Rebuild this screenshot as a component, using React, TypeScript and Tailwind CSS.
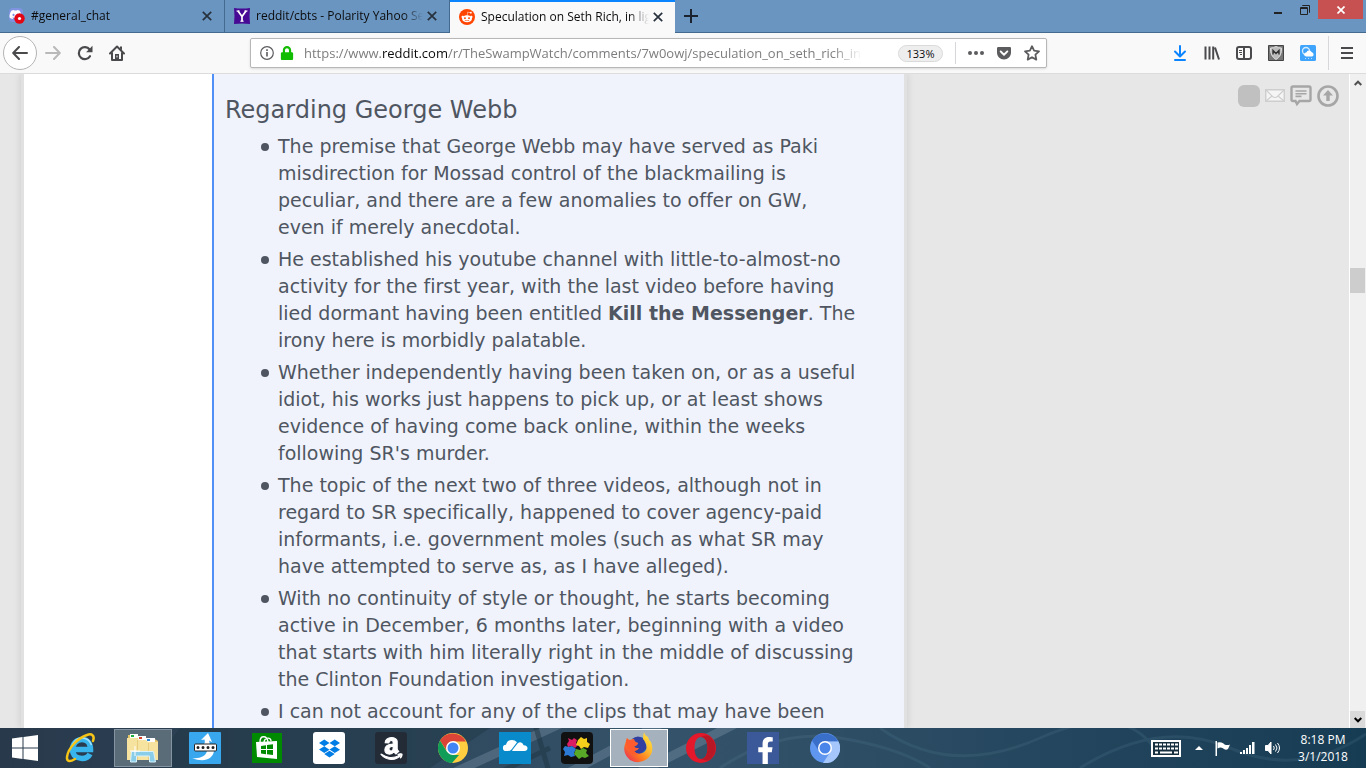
import React, { useState } from 'react';
import { FaAmazon, FaDiscord, FaDropbox, FaFacebookF, FaGetPocket, FaLock, FaRedditAlien } from 'react-icons/fa';

const uiFont = "font-['Open_Sans',sans-serif]";

const CloseIcon = () => (
  <svg width="10" height="10" viewBox="0 0 10 10" fill="none" stroke="#27313c" strokeWidth="1.7">
    <path d="M.8.8l8.4 8.4M9.2.8L.8 9.2" />
  </svg>
);

const tabs = [
  {
    title: '#general_chat',
    active: false,
    icon: (
      <span className="relative block size-4">
        <span className="absolute left-0 top-0 h-3.5 w-3.5 rounded bg-[#7f93e0] text-white">
          <FaDiscord size={13} />
        </span>
        <svg className="absolute left-[5px] top-[5px]" width="11" height="11" viewBox="0 0 11 11">
          <circle cx="5.5" cy="5.5" r="5.2" fill="#e30613" />
          <circle cx="5.5" cy="5.5" r="1.6" fill="#fff" />
        </svg>
      </span>
    ),
  },
  {
    title: 'reddit/cbts - Polarity Yahoo Sea',
    active: false,
    icon: (
      <svg width="16" height="16" viewBox="0 0 16 16">
        <path fill="#470a94" d="M0 0q8 1 16 0q-1 8 0 16q-8-1-16 0q1-8 0-16z" />
        <path fill="none" stroke="#fff" strokeWidth="1.7" d="M3.8 2.8L8 8.6l4.2-5.8M8 8v5.5" />
        <path stroke="#fff" d="M2.5 3h3.2M10.3 3h3.2M6.3 13.2h3.4" />
      </svg>
    ),
  },
  {
    title: 'Speculation on Seth Rich, in light',
    active: true,
    icon: (
      <span className="flex size-4 items-center justify-center rounded-full bg-[#ff4500] text-white">
        <FaRedditAlien size={12} />
      </span>
    ),
  },
];

const TabStrip = () => {
  const [current, setCurrent] = useState(tabs.findIndex((tab) => tab.active));

  return (
    <div className={`flex h-[33px] shrink-0 bg-[#6a95c0] ${uiFont}`}>
      {tabs.map((tab, i) => (
        <div
          key={tab.title}
          className={`flex w-[225px] items-center pl-[9px] pr-3 ${
            current === i
              ? 'border-t-2 border-[#0a84ff] bg-[#f9f9fa] pb-0.5'
              : 'border-b border-r border-[#446a8f]'
          }`}
        >
          <button type="button" className="flex min-w-0 flex-1 items-center gap-1.5" onClick={() => setCurrent(i)}>
            {tab.icon}
            <span className="flex-1 overflow-hidden whitespace-nowrap text-left text-[12px] leading-4 text-[#0c0c0d] [mask-image:linear-gradient(to_left,transparent,black_20px)]">
              {tab.title}
            </span>
          </button>
          <button type="button" aria-label="Close tab" className="ml-1">
            <CloseIcon />
          </button>
        </div>
      ))}
      <div className="flex flex-1 items-start justify-between border-b border-[#446a8f]">
        <button type="button" aria-label="New tab" className="p-[9px]">
          <svg width="14" height="14" viewBox="0 0 14 14" stroke="#1b242e" strokeWidth="2">
            <path d="M7 0v14M0 7h14" />
          </svg>
        </button>
        <div className="flex pr-[3px]">
          <button type="button" aria-label="Minimize" className="flex h-[19px] w-[26px] items-center justify-center">
            <svg width="8" height="12" viewBox="0 0 8 12"><path fill="#222" d="M0 8h8v2H0z" /></svg>
          </button>
          <button type="button" aria-label="Restore" className="flex h-[19px] w-[27px] items-center justify-center">
            <svg width="10" height="10" viewBox="0 0 10 10" fill="none" stroke="#222">
              <path d="M2.5 1V.5h7v7H9M.5 2.5h7v7h-7zM.5 3.5h7" />
            </svg>
          </button>
          <button type="button" aria-label="Close window" className="flex h-[19px] w-[45px] items-center justify-center bg-[#c75050]">
            <svg width="8" height="8" viewBox="0 0 8 8" stroke="#fff" strokeWidth="1.7"><path d="M.5.5l7 7M7.5.5l-7 7" /></svg>
          </button>
        </div>
      </div>
    </div>
  );
};

const NavBar = () => (
  <nav className={`flex h-[41px] shrink-0 items-center border-b border-[#dcdcdd] bg-[#f9f9fa] pl-[3px] ${uiFont}`}>
    <button type="button" aria-label="Back" className="flex size-[34px] items-center justify-center rounded-full border border-[#b4b4b5] bg-white">
      <svg width="16" height="14" viewBox="0 0 16 14" fill="none" stroke="#4a4a4d" strokeWidth="2" strokeLinecap="round" strokeLinejoin="round">
        <path d="M15 7H1.5M7 1L1.2 7L7 13" />
      </svg>
    </button>
    <button type="button" aria-label="Forward" className="ml-2">
      <svg width="16" height="14" viewBox="0 0 16 14" fill="none" stroke="#b9b9ba" strokeWidth="2" strokeLinecap="round" strokeLinejoin="round">
        <path d="M1 7h13.5M9 1l5.8 6L9 13" />
      </svg>
    </button>
    <button type="button" aria-label="Reload" className="ml-4">
      <svg width="16" height="16" viewBox="0 0 16 16">
        <path fill="none" stroke="#4a4a4d" strokeWidth="2.2" strokeLinecap="round" d="M13 11.2A6 6 0 1 1 12.6 4.5" />
        <path fill="#4a4a4d" d="M15.5.8v6.4H9.1z" />
      </svg>
    </button>
    <button type="button" aria-label="Home" className="ml-4">
      <svg width="16" height="16" viewBox="0 0 16 16" fill="none" stroke="#4a4a4d" strokeWidth="2" strokeLinejoin="round" strokeLinecap="round">
        <path d="M1 8.5L8 1.5l7 7M3 8v7h10V8" />
        <path fill="#4a4a4d" stroke="none" d="M6 9h4v6H6zM11 1.5h2v4l-2-2z" />
        <path stroke="#f9f9fa" strokeWidth="1" d="M8 11v1" />
      </svg>
    </button>
    <div className="ml-[125px] flex h-[30px] w-[797px] items-center rounded-[2px] border border-[#b7b7b8] bg-white pl-[9px] pr-[6px] shadow-sm">
      <svg width="14" height="14" viewBox="0 0 14 14">
        <circle cx="7" cy="7" r="6.3" fill="none" stroke="#5c5c5f" strokeWidth="1.2" />
        <path fill="#5c5c5f" d="M6.2 6h1.6v4.5H6.2zM6.2 3.3h1.6v1.6H6.2z" />
      </svg>
      <FaLock className="ml-1.5 text-[#12bc00]" size={14} />
      <div className="relative ml-[10px] h-5 min-w-0 flex-1 overflow-hidden text-[13px] leading-5">
        <input
          aria-label="Address"
          readOnly
          className="absolute inset-0 w-full text-transparent outline-none"
        />
        <span className="pointer-events-none block whitespace-nowrap text-[#7d7d7f] [mask-image:linear-gradient(to_left,transparent,black_30px)]">
          https://www.<span className="text-[#0c0c0d]">reddit.com</span>/r/TheSwampWatch/comments/7w0owj/speculation_on_seth_rich_in
        </span>
      </div>
      <button type="button" className="ml-9 h-[17px] w-[45px] rounded-full border border-[#dadada] bg-[#eeeeef] text-[11px] leading-[15px] text-[#0c0c0d]">
        133%
      </button>
      <span className="ml-3 h-[22px] w-px bg-[#d7d7db]" />
      <button type="button" aria-label="Page actions" className="ml-3">
        <svg width="16" height="16" viewBox="0 0 16 16" fill="#5c5c5f">
          <circle cx="2" cy="8" r="2" /><circle cx="8" cy="8" r="2" /><circle cx="14" cy="8" r="2" />
        </svg>
      </button>
      <button type="button" aria-label="Save to Pocket" className="ml-3 text-[#5c5c5f]">
        <FaGetPocket size={16} />
      </button>
      <button type="button" aria-label="Bookmark" className="ml-3">
        <svg width="16" height="16" viewBox="0 0 16 16" fill="none" stroke="#5c5c5f" strokeWidth="1.8" strokeLinejoin="round">
          <path d="M8 1.2l2.1 4.5 4.9.6-3.6 3.4.9 4.9L8 12.2l-4.3 2.4.9-4.9L1 6.3l4.9-.6z" />
        </svg>
      </button>
    </div>
    <div className="ml-auto flex items-center gap-4 pr-[11px]">
      <button type="button" aria-label="Downloads">
        <svg width="16" height="16" viewBox="0 0 16 16" fill="none" stroke="#0a84ff" strokeWidth="2" strokeLinecap="round" strokeLinejoin="round">
          <path d="M8 1v10M3 6.500l5 5 5-5M3 15h10" />
        </svg>
      </button>
      <button type="button" aria-label="Library">
        <svg width="16" height="16" viewBox="0 0 16 16" fill="none" stroke="#4a4a4d" strokeWidth="2">
          <path d="M1.500 1.500v13M5.500 1.500v13M9.200 1.500v13M11 2.500l4 12" />
        </svg>
      </button>
      <button type="button" aria-label="Sidebars">
        <svg width="16" height="16" viewBox="0 0 16 16" fill="none" stroke="#4a4a4d" strokeWidth="2">
          <rect x="1" y="2" width="14" height="12" rx="2" />
          <path d="M8 2v12" />
          <path strokeWidth="1" d="M3 5.500h3M3 7.500h3M4 9.500h2" />
        </svg>
      </button>
      <button type="button" aria-label="Shield add-on">
        <svg width="16" height="16" viewBox="0 0 16 16">
          <path fill="#777" stroke="#444" d="M.5.5h15v15H.5z" />
          <path fill="#bbb" stroke="#ddd" d="M2.500 3q3 0 5.500-1.500Q10.500 3 13.500 3q.5 8-5.500 11.500Q2 11 2.500 3z" />
          <path fill="none" stroke="#333" strokeWidth="1.400" d="M5 9.500V5.500l3 3 3-3v4" />
        </svg>
      </button>
      <button type="button" aria-label="Weather">
        <svg width="16" height="16" viewBox="0 0 16 16">
          <rect width="16" height="16" rx="1.500" fill="#3fa4fb" />
          <circle cx="6" cy="6" r="3.500" fill="none" stroke="#d5ecff" strokeWidth="1.300" />
          <path fill="#fff" d="M6 11.500a2 2 0 0 1 .3-4 3 3 0 0 1 5.500-.2 2.200 2.200 0 0 1 .4 4.200z" />
          <path stroke="#b9dfff" strokeDasharray="1 2" d="M5 13.500h7" />
        </svg>
      </button>
      <span className="-ml-1 h-[34px] w-px bg-[#d7d7db]" />
      <button type="button" aria-label="Menu" className="-ml-1.5">
        <svg width="16" height="16" viewBox="0 0 16 16" stroke="#4a4a4d" strokeWidth="2">
          <path d="M2 3h12M2 8h12M2 13h12" />
        </svg>
      </button>
    </div>
  </nav>
);

const points: React.ReactNode[] = [
  'The premise that George Webb may have served as Paki misdirection for Mossad control of the blackmailing is peculiar, and there are a few anomalies to offer on GW, even if merely anecdotal.',
  <>
    He established his youtube channel with little-to-almost-no activity for the first year, with the last video before having
    lied dormant having been entitled <strong>Kill the Messenger</strong>. The irony here is morbidly palatable.
  </>,
  "Whether independently having been taken on, or as a useful idiot, his works just happens to pick up, or at least shows evidence of having come back online, within the weeks following SR's murder.",
  'The topic of the next two of three videos, although not in regard to SR specifically, happened to cover agency-paid informants, i.e. government moles (such as what SR may have attempted to serve as, as I have alleged).',
  'With no continuity of style or thought, he starts becoming active in December, 6 months later, beginning with a video that starts with him literally right in the middle of discussing the Clinton Foundation investigation.',
  'I can not account for any of the clips that may have been',
];

const Page = () => (
  <main className="flex min-h-0 flex-1 overflow-hidden bg-[#e7e7e7] font-['DejaVu_Sans',sans-serif] [font-variant-ligatures:none]">
    <div className="ml-[21px] flex shrink-0 border-x-[3px] border-[#e1e1e1] bg-white pl-[188px] shadow-[0_0_8px_rgba(0,0,0,0.12)]">
      <article className="w-[692px] border-l-2 border-[#4f8ff7] bg-[#f0f3fc] pl-[11px] text-[#4f5661]">
        <h2 className="mt-5 text-[24px] leading-8">Regarding George Webb</h2>
        <ul className="mt-[7px] w-[633px] space-y-[5px] pl-[53px]">
          {points.map((point, i) => (
            <li key={i} className="relative text-[19px] leading-[27px]">
              <span className="absolute -left-[17px] top-[10px] size-2 rounded-full bg-[#4f5661]" />
              {point}
            </li>
          ))}
        </ul>
      </article>
    </div>
    <div className="flex flex-1 items-start justify-end gap-[5px] pr-[10px] pt-[11px]">
      <span className="size-[22px] rounded-md bg-[#c0c0c0]" />
      <a href="#messages" aria-label="Messages" className="mt-1">
        <svg width="20" height="13" viewBox="0 0 20 13" fill="#f5f5f5" stroke="#cecece" strokeWidth="1.500">
          <path d="M.7.7h18.600v11.600H.7z" />
          <path fill="none" strokeWidth="1.200" d="M1 1l6.500 6.500Q10 9.500 12.500 7.500L19 1M1 12l6-5M19 12l-6-5" />
        </svg>
      </a>
      <a href="#chat" aria-label="Chat">
        <svg width="22" height="22" viewBox="0 0 22 22" fill="none" stroke="#a6a6a6" strokeWidth="2.400">
          <path d="M3 1.500h16q1.500 0 1.500 1.500v11.500q0 1.500-1.500 1.500H9.500L7 19l-1.500-3H3q-1.500 0-1.500-1.500V3q0-1.500 1.500-1.500z" />
          <path strokeWidth="1.600" d="M5.500 6h11M5.500 8.700h11M5.500 11.400h6" />
        </svg>
      </a>
      <a href="#top" aria-label="Back to top">
        <svg width="22" height="22" viewBox="0 0 22 22">
          <circle cx="11" cy="11" r="9.500" fill="none" stroke="#a6a6a6" strokeWidth="2.600" />
          <path fill="#a6a6a6" d="M11 5l5 5.500h-3.300V16H9.300v-5.500H6z" />
        </svg>
      </a>
    </div>
    <div className="flex w-[17px] shrink-0 flex-col border-l border-white bg-[#f0f0f0]">
      <button type="button" aria-label="Scroll up" className="flex h-[17px] w-full items-center justify-center">
        <svg width="8" height="6" viewBox="0 0 8 6" fill="none" stroke="#505050" strokeWidth="2"><path d="M.7 5L4 1.700 7.300 5" /></svg>
      </button>
      <div className="mt-[177px] h-[25px] w-[15px] bg-[#cdcdcd]" />
      <button type="button" aria-label="Scroll down" className="mt-auto flex h-[17px] w-[15px] items-center justify-center bg-[#dadada]">
        <svg width="8" height="6" viewBox="0 0 8 6" fill="none" stroke="#000" strokeWidth="2"><path d="M.7 1L4 4.300 7.300 1" /></svg>
      </button>
    </div>
  </main>
);

const apps = [
  {
    name: 'Internet Explorer',
    icon: (
      <svg width="32" height="32" viewBox="0 0 32 32">
        <path fill="none" stroke="#39b5ee" strokeWidth="5.500" d="M8 17.500h17.500C25.500 11 22 7.500 17 7.500S7.500 11.500 7.500 17.500 12 26.500 17 26.500c4 0 6.500-1.500 8-4.500" />
        <path fill="none" stroke="#a7e2fb" strokeWidth="1.500" d="M7 14q3-8 10-8t9.500 7" />
        <path fill="none" stroke="#f6c416" strokeWidth="2.500" strokeLinecap="round" d="M28 9c2-5-1-8-6-6C13 6 3 16 2 25c-.5 5 3 5 8 2" />
      </svg>
    ),
  },
  {
    name: 'File Explorer',
    open: true,
    icon: (
      <svg width="34" height="30" viewBox="0 0 34 30">
        <path fill="#e3c468" d="M2 2h9l2 3h14l5 3v19H2z" />
        <path fill="#fff" d="M4 1h8v4H4zM12 3h8v4h-8zM20 5h9v4h-9z" />
        <path fill="#1fae3b" d="M5 2h3v2H5z" /><path fill="#d9402b" d="M13 4h3v2h-3z" /><path fill="#2d8bd8" d="M21 6h3v2h-3z" />
        <path fill="#f7e3a0" d="M1 5h10l2 2h7l2 2h10v18H1z" />
        <path stroke="#e8cd80" d="M11.500 7v20M22.500 10v17" />
        <path fill="#89cde9" stroke="#d6f2fc" d="M5.500 18.500h22l2 10.500h-6v-6h-13v6h-6z" />
        <path stroke="#fff" d="M9 13v10M4 18h10" />
      </svg>
    ),
  },
  {
    name: 'Password Manager',
    icon: (
      <svg width="32" height="32" viewBox="0 0 32 32">
        <rect width="32" height="32" rx="1" fill="#39a7ee" />
        <path fill="#fff" d="M19 1l4 9-3-1.500q1 3 .5 4H15q1.500-3 .5-5L12 8zM25 19c-1 8-10 12-22 7 8 1 14-2 15-7z" />
        <rect x="5.500" y="12" width="22" height="7" rx="1" fill="#fff" stroke="#222" />
        <path stroke="#222" strokeWidth="3" strokeLinecap="round" strokeDasharray="0 5" d="M9 15.500h16" />
      </svg>
    ),
  },
  {
    name: 'Store',
    icon: (
      <svg width="30" height="30" viewBox="0 0 30 30">
        <path fill="#008a00" d="M0 0h30v30H0z" />
        <path fill="none" stroke="#fff" strokeWidth="1.400" d="M8 9c0-7 7-7 8 0M12 9c1-5 7-5 7-1" />
        <path fill="#fff" d="M4 9l21-1v18L5 24z" />
        <path fill="#008a00" d="M9 13l5-.7V16H9zM15 12l6-.7V16h-6zM9 17h5v4.200L9 20.500zM15 17h6v5l-6-.7z" />
      </svg>
    ),
  },
  {
    name: 'Dropbox',
    icon: (
      <span className="flex size-8 items-center justify-center rounded-[3px] bg-white text-[#007ee5]">
        <FaDropbox size={21} />
      </span>
    ),
  },
  {
    name: 'Amazon',
    icon: (
      <span className="flex size-8 items-center justify-center rounded-[3px] bg-[#232b37] text-white">
        <FaAmazon size={25} stroke="currentColor" strokeWidth={22} />
      </span>
    ),
  },
  {
    name: 'Chrome',
    icon: (
      <svg width="30" height="30" viewBox="0 0 30 30">
        <circle cx="15" cy="15" r="15" fill="#ffcd40" />
        <path fill="#db4437" d="M2 7.500A15 15 0 0 1 28 8.500H15L9 18z" />
        <path fill="#0f9d58" d="M2 7.500L8.800 18.500 15 22h6l-7 8A15 15 0 0 1 2 7.500z" />
        <circle cx="15" cy="15" r="7" fill="#fff" /><circle cx="15" cy="15" r="5.500" fill="#4285f4" />
      </svg>
    ),
  },
  {
    name: 'Cloud',
    icon: (
      <svg width="32" height="32" viewBox="0 0 32 32">
        <path fill="#088acb" d="M0 0h32v32H0z" />
        <path fill="#fff" d="M7 19a3 3 0 0 1 0-6.200Q8 8 13 8q3 0 5 2.200l-5.500 7.300Q11 19 9 19z" />
        <path fill="#fff" d="M13.500 19q-1 0 .3-1.500l4.700-6q4-3 6.200 1.800 3.800.3 3.800 3-.2 2.700-3 2.700z" />
      </svg>
    ),
  },
  {
    name: 'Puzzle',
    icon: (
      <svg width="32" height="32" viewBox="0 0 32 32">
        <rect width="32" height="32" rx="4" fill="#111" />
        <path fill="#d91e63" d="M7 6l4 2 2-2 3 2-1 3 2 2-3 3-3-2-4 1-1-3 2-3z" />
        <path fill="#f5cf1b" d="M17 8l3-3 3 2 3-1v4l3 2-2 4-4-1-3 2-2-3-3-1z" />
        <path fill="#2b7bd6" d="M4 14l4 1 3-1 4 3-2 4 1 3-4 1-3-2-4 1 1-4-2-3z" />
        <path fill="#58a928" d="M15 17l4 1 3-2 4 2-1 3 3 3-4 2-3-1-3 2-3-3-2-2z" />
      </svg>
    ),
  },
  {
    name: 'Firefox',
    open: true,
    focused: true,
    icon: (
      <svg width="32" height="32" viewBox="0 0 32 32">
        <defs>
          <linearGradient id="fox" x1="1" y1="0" x2="0" y2="1">
            <stop offset="0" stopColor="#fff044" /><stop offset=".35" stopColor="#ffbd2f" />
            <stop offset=".65" stopColor="#ff7420" /><stop offset="1" stopColor="#e51a67" />
          </linearGradient>
        </defs>
        <circle cx="16" cy="16" r="11" fill="#1787d4" />
        <path fill="#333fa0" d="M9 7q6-5 12 0l3 9-8 8-9-7z" />
        <path fill="url(#fox)" d="M4 6q1 2 3 2l4-1q0 3 4 4-1 3-4 3 1 3 5 2-2 3-5 3 3 4 8 2 6-2 4-9-1-3-3-5 0-4 1-7 1 4 4 5l1 3 2 2q4 11-4 17-8 6-17 1Q-1 21 2 12z" />
        <path fill="#ff5b2e" d="M4 6q1 2 3 2l4-1q0 3 4 4-1 3-4 3 1 3 5 2-2 3-5 3 2 3 5 3-7 2-10-4Q1 12 4 6z" />
      </svg>
    ),
  },
  {
    name: 'Opera',
    icon: (
      <svg width="30" height="30" viewBox="0 0 30 30">
        <path fill="#e3182a" fillRule="evenodd" d="M15 0a15 15 0 1 0 0 30 15 15 0 0 0 0-30zm0 4c4.500 0 6.500 5 6.500 11s-2 11-6.500 11S8.500 21 8.500 15s2-11 6.500-11z" />
        <path fill="#b81825" d="M15 4q4-2 8-1.300A15 15 0 0 1 23 27.300q-4 .7-8-1.300c4.500 0 6.500-5 6.500-11S19.500 4 15 4z" />
      </svg>
    ),
  },
  {
    name: 'Facebook',
    icon: (
      <span className="flex size-8 items-end justify-end bg-[#3b5998] text-white">
        <FaFacebookF size={27} />
      </span>
    ),
  },
  {
    name: 'Chromium',
    icon: (
      <svg width="30" height="30" viewBox="0 0 30 30">
        <circle cx="15" cy="15" r="15" fill="#5f97f0" />
        <path fill="#3a6fc9" d="M2 7.500A15 15 0 0 1 28 8.500H15L9 18z" />
        <path fill="#a5c6fa" d="M15 8.500h13.500A15 15 0 0 1 13 30l8-12z" />
        <circle cx="15" cy="15" r="7" fill="#fff" /><circle cx="15" cy="15" r="5.500" fill="#4a86ea" />
      </svg>
    ),
  },
];

// Faint wallpaper showing through the translucent bar
const Wallpaper = () => (
  <svg className="absolute inset-0 size-full" viewBox="0 0 1366 40" preserveAspectRatio="none" fill="none" aria-hidden="true">
    <path fill="#1f3846" opacity=".5" d="M180 0h310l-60 40H150z" />
    <path stroke="#93a5b8" opacity=".3" strokeWidth="9" d="M455 44L560-4M570 44L660-4M640 44L735-4" />
    <path stroke="#1c3442" opacity=".5" strokeWidth="5" d="M535-4l14 48M500 44l50-24" />
    <path stroke="#6a95a8" opacity=".15" strokeWidth="3" d="M720 40q60-40 120-30t90 30M880 0q70 50 160 10t120 20M1080 40q80-50 150-20t136-14" />
  </svg>
);

const Taskbar = () => (
  <footer className={`relative h-10 shrink-0 overflow-hidden bg-linear-to-r from-[#28394b] via-[#34536a] to-[#163c54] text-white ${uiFont}`}>
    <Wallpaper />
    <div className="relative flex h-full items-center">
      <button type="button" aria-label="Start" className="flex w-[52px] pl-3">
        <svg width="26" height="26" viewBox="0 0 26 26" fill="#fff">
          <path d="M0 3.500L10.500 2v10.500H0zM11.500 1.900L26 0v12.500H11.500zM0 13.500h10.500V24L0 22.500zM11.500 13.500H26V26l-14.500-2z" />
        </svg>
      </button>
      <div className="flex gap-1">
        {apps.map((app) => (
          <button
            key={app.name}
            type="button"
            aria-label={app.name}
            className={`flex h-[38px] w-[58px] items-center justify-center ${
              app.focused ? 'border border-white bg-[#a5b2be]' : app.open ? 'border border-[#8594a0] bg-[#5a6c77]' : ''
            }`}
          >
            {app.icon}
          </button>
        ))}
      </div>
      <div className="ml-auto flex items-center">
        <svg width="30" height="17" viewBox="0 0 30 17">
          <path fill="#16303f" stroke="#fff" strokeWidth="2" d="M1 1h28v15H1z" />
          <path stroke="#fff" strokeWidth="2" strokeDasharray="3 1" d="M4 4.500h23M4 8.500h23" />
          <path stroke="#fff" strokeWidth="2" d="M4 12.500h3M9 12.500h12M23 12.500h4" />
        </svg>
        <svg className="ml-3.5" width="8" height="4" viewBox="0 0 8 4" fill="#fff"><path d="M4 0l4 4H0z" /></svg>
        <svg className="ml-3" width="15" height="15" viewBox="0 0 15 15" fill="#fff">
          <path d="M.5 0H2v15H.5zM2.500 1.500q3-1 6 1l1 1q3 1 5.500 0L13 8q-2 1.500-4 0L7.500 7q-2-1-5 .5z" />
        </svg>
        <svg className="ml-2.5" width="15" height="12" viewBox="0 0 15 12" fill="#fff">
          <path d="M0 10h2v2H0zM3 8h2v4H3zM6 6h2v6H6zM9 3h2v9H9zM12 0h2.500v12H12z" />
        </svg>
        <svg className="ml-2.5" width="15" height="14" viewBox="0 0 15 14" fill="none" stroke="#fff">
          <path fill="#fff" d="M.5 4.500H3l3-3.500v12L3 9.500H.5z" />
          <path d="M8.500 5q1.500 2 0 4M10.500 3.500q3 3.500 0 7M12.500 2q4 5 0 10" />
        </svg>
        <div className="w-[86px] text-center text-[12px] leading-[17px]">
          <p>8:18 PM</p>
          <p>3/1/2018</p>
        </div>
      </div>
    </div>
  </footer>
);

const App = () => {
  return (
    <div className="flex h-screen flex-col overflow-hidden">
      <TabStrip />
      <NavBar />
      <Page />
      <Taskbar />
    </div>
  );
};

export default App;
